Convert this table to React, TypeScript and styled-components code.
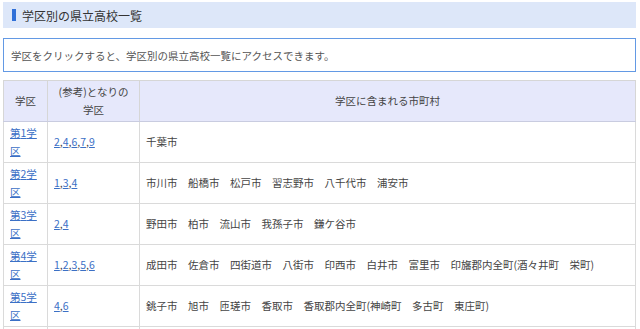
import React from 'react';
import styled, { createGlobalStyle } from 'styled-components';

const GlobalStyle = createGlobalStyle`
  body {
    margin: 0;
    background: #ffffff;
    font-family: "Noto Sans CJK JP", "Noto Sans", sans-serif;
    color: #444;
  }
`;

const Page = styled.div`
  width: 633px;
  padding: 2px 0 0 3px;
  display: flex;
  flex-direction: column;
`;

const Heading = styled.h2`
  margin: 0;
  height: 26px;
  background: #dde7f9;
  display: flex;
  align-items: center;
  gap: 6px;
  padding-left: 9px;
  font-size: 12px;
  font-weight: 400;
  color: #333;
  &::before {
    content: "";
    width: 4px;
    height: 12px;
    background: #3070d8;
  }
`;

const Notice = styled.p`
  margin: 10px 0 0 0;
  height: 34px;
  box-sizing: border-box;
  border: 1px solid #6399e4;
  padding: 0 7px;
  display: flex;
  align-items: center;
  font-size: 10.5px;
  color: #555;
`;

const Table = styled.table`
  margin-top: 8px;
  width: 633px;
  border-collapse: collapse;
  table-layout: fixed;
  font-size: 10.5px;
  border: 1px solid #d6d6d6;
`;

// width is the content width; 12px padding and 1px border come on top
const Th = styled.th<{ w?: number }>`
  width: ${({ w }) => (w ? `${w}px` : 'auto')};
  background: #e6e8fb;
  font-weight: 400;
  color: #444;
  line-height: 18px;
  padding: 2px 6px;
  text-align: center;
  border: 1px solid #d6d6d6;
  border-bottom-color: #c9cce0;
`;

const Td = styled.td`
  line-height: 18px;
  padding: 2px 6px;
  border: 1px solid #dadada;
  vertical-align: middle;
  color: #444;
`;

const Link = styled.a`
  color: #3b70c6;
  text-decoration: underline;
`;

interface District {
  no: number;
  near: string;
  towns: string;
}

const districts: District[] = [
  { no: 1, near: '2,4,6,7,9', towns: '千葉市' },
  { no: 2, near: '1,3,4', towns: '市川市　船橋市　松戸市　習志野市　八千代市　浦安市' },
  { no: 3, near: '2,4', towns: '野田市　柏市　流山市　我孫子市　鎌ケ谷市' },
  { no: 4, near: '1,2,3,5,6', towns: '成田市　佐倉市　四街道市　八街市　印西市　白井市　富里市　印旛郡内全町(酒々井町　栄町)' },
  { no: 5, near: '4,6', towns: '銚子市　旭市　匝瑳市　香取市　香取郡内全町(神崎町　多古町　東庄町)' },
  { no: 6, near: '1,4,5,7', towns: '東金市　山武市　大網白里市　山武郡内全町(九十九里町　芝山町　横芝光町)' },
];

export default function App() {
  return (
    <>
      <GlobalStyle />
      <Page>
        <Heading>学区別の県立高校一覧</Heading>
        <Notice>学区をクリックすると、学区別の県立高校一覧にアクセスできます。</Notice>
        <Table>
          <thead>
            <tr>
              <Th w={31}>学区</Th>
              <Th w={79}>(参考)となりの学区</Th>
              <Th>学区に含まれる市町村</Th>
            </tr>
          </thead>
          <tbody>
            {districts.map((d) => (
              <tr key={d.no}>
                <Td>
                  <Link href="#">第{d.no}学区</Link>
                </Td>
                <Td>
                  {d.near.split(',').map((n, i) => (
                    <React.Fragment key={n}>
                      {i > 0 && ','}
                      <Link href="#">{n}</Link>
                    </React.Fragment>
                  ))}
                </Td>
                <Td>{d.towns}</Td>
              </tr>
            ))}
          </tbody>
        </Table>
      </Page>
    </>
  );
}
